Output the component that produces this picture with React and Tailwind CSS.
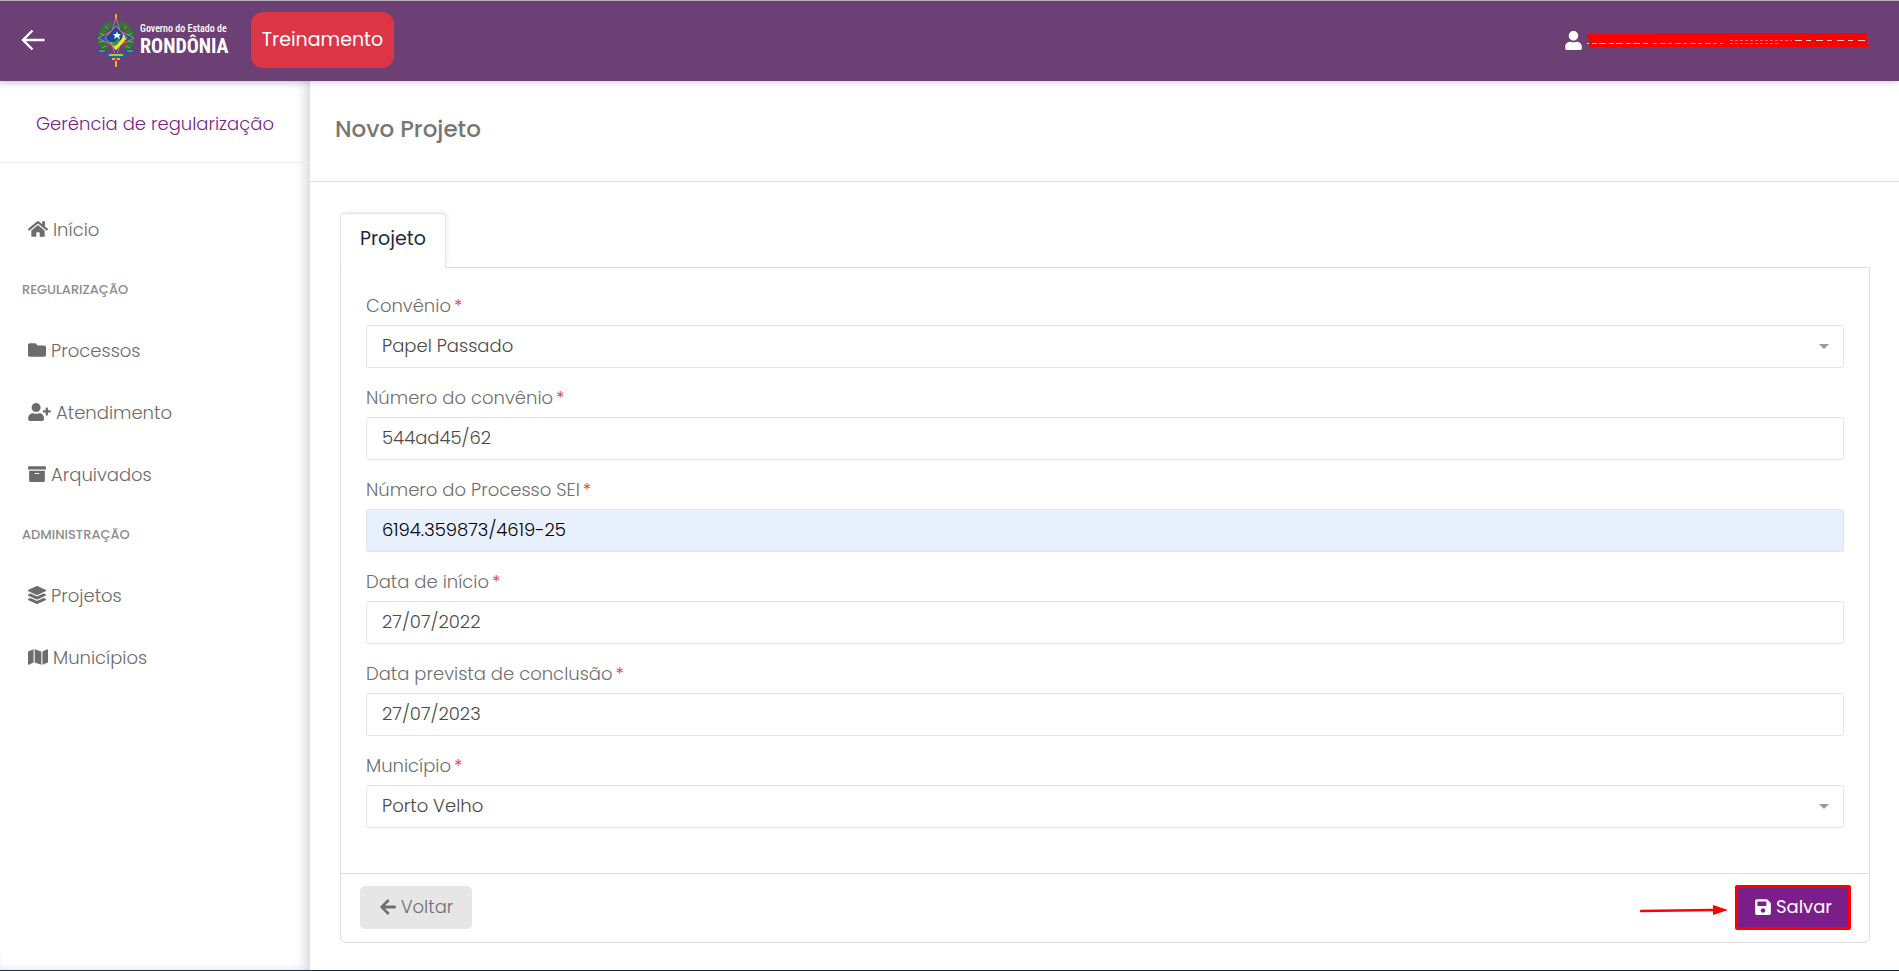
import { useState } from 'react';
import {
  FaArchive,
  FaArrowLeft,
  FaFolder,
  FaHome,
  FaLayerGroup,
  FaMap,
  FaSave,
  FaUser,
  FaUserPlus
} from 'react-icons/fa';

const menu = [
  { items: [{ label: 'Início', icon: FaHome, size: 'w-5' }] },
  {
    title: 'Regularização',
    items: [
      { label: 'Processos', icon: FaFolder, size: 'w-[18px]' },
      { label: 'Atendimento', icon: FaUserPlus, size: 'w-[23px]' },
      { label: 'Arquivados', icon: FaArchive, size: 'w-[18px]' }
    ]
  },
  {
    title: 'Administração',
    items: [
      { label: 'Projetos', icon: FaLayerGroup, size: 'w-[18px]' },
      { label: 'Municípios', icon: FaMap, size: 'w-5' }
    ]
  }
];

const fields = [
  { name: 'convenio', label: 'Convênio', options: ['Papel Passado'] },
  { name: 'numeroConvenio', label: 'Número do convênio' },
  { name: 'processoSei', label: 'Número do Processo SEI', autofilled: true },
  { name: 'dataInicio', label: 'Data de início' },
  { name: 'dataConclusao', label: 'Data prevista de conclusão' },
  { name: 'municipio', label: 'Município', options: ['Porto Velho'] }
];

function Emblem() {
  return (
    <svg viewBox="0 0 38 53" className="h-[53px] w-[38px]" aria-hidden="true">
      {/* wreath */}
      <path d="M15 9.500A15.500 15.500 0 0 0 10 36M23 9.500A15.500 15.500 0 0 1 28 36" fill="none" stroke="#1f7d3c" strokeWidth="7" />
      <path d="M8 12l3 3M3 19l4 2M2 28l5-1M5 34l4-2M30 12l-3 3M35 19l-4 2M36 28l-5-1M33 34l-4-2" stroke="#7fae3f" strokeWidth="1" />
      <path d="M6 15l2 3M10 11l2 1M8 30l3 2M32 15l-2 3M28 11l-2 1M30 30l-3 2" stroke="#c9303e" strokeWidth="2" />
      {/* sword */}
      <path d="M19 0v11M19 42v11" stroke="#e9b21e" strokeWidth="2" />
      <path d="M15 45h8" stroke="#e9b21e" strokeWidth="2" />
      <path d="M19 42v5" stroke="#d33a35" strokeWidth="2" />
      {/* star */}
      <path d="M19 4l4 13 14 7-14 7-4 12-4-12-14-7 14-7z" fill="#1c56a8" stroke="#e07068" strokeWidth="1" />
      <path d="M19 12l11 12-11 12L8 24z" fill="#1747a0" stroke="#d8868e" strokeWidth="1" />
      <path d="M26 19c0 8-5 11-13 9l6 8 10-11z" fill="#f2e534" />
      <path d="M21 23c-2 5-4 6-7 6l3 3c4-1 6-4 6-9z" fill="#2f9348" />
      <path d="M20 17l1 3h3l-2 2 1 3-3-2-3 2 1-3-2-2h3z" fill="#fff" />
      {/* ribbons */}
      <path d="M0 35h9v4H1zM29 35h9l-1 4h-8z" fill="#1d50b0" />
      <path d="M2 37h6M30 37h6" stroke="#c9b64a" strokeWidth="1" />
      <path d="M10 39h18v4H10z" fill="#1d62b4" />
      <path d="M12 41h14" stroke="#a8c93e" strokeWidth="2" />
    </svg>
  );
}

function Header() {
  return (
    <header className="relative z-10 flex h-[81px] shrink-0 items-center border-t border-[#b9b0bb] bg-[#6c3f75] pr-[30px] pb-[2px] pl-[21px] text-white shadow-md">
      <button type="button" aria-label="Recolher menu" className="mr-[52px]">
        <svg viewBox="0 0 24 22" className="h-[22px] w-6" fill="none" stroke="currentColor" strokeWidth="2.4">
          <path d="M11.500 1.500L2 11l9.500 9.500M2 11h21.500" />
        </svg>
      </button>
      <a href="#" className="flex items-center gap-[5px]">
        <Emblem />
        <span className="flex w-[86px] flex-col whitespace-nowrap font-['Roboto_Condensed','Barlow_Condensed',Roboto,sans-serif] font-bold">
          <span className="text-[10px] leading-[12px] font-medium">Governo do Estado de</span>
          <span className="text-[20px] leading-[23px]">RONDÔNIA</span>
        </span>
      </a>
      <button type="button" className="ml-[25px] h-14 w-[143px] rounded-xl bg-[#dc3545] text-[19px] font-normal">
        Treinamento
      </button>
      <a href="#" aria-label="Usuário" className="ml-auto flex items-center gap-[5px]">
        <FaUser className="h-[19px] w-[17px]" />
        <svg viewBox="0 0 282 14" className="h-[14px] w-[282px]" aria-hidden="true">
          <path d="M1 1h69V0h210v11l2 1v2H2V6L0 4z" fill="#ff0000" />
          <path d="M0 10.500h2M5 10.500h56" stroke="#e8c8d8" strokeWidth="1" strokeDasharray="5 2 7 3" />
          <path d="M66 10.500h70" stroke="#ff9090" strokeWidth="1" strokeDasharray="4 3 6 2" />
          <path d="M143 7.500h62M143 10.500h50" stroke="#ff7070" strokeWidth="1" strokeDasharray="3 2" />
          <path d="M208 7.500h72" stroke="#ffd8d8" strokeWidth="1" strokeDasharray="7 4 5 5" />
        </svg>
      </a>
    </header>
  );
}

function Sidebar() {
  return (
    <aside className="w-[310px] shrink-0 shadow-[inset_-6px_0_12px_-2px_#d3d6dc]">
      <h2 className="flex h-[82px] items-center justify-center border-b border-[#ececef] pt-1 text-[18px] text-[#7b1e8a]">
        Gerência de regularização
      </h2>
      <nav className="pt-[35px]">
        {menu.map((group, index) => (
          <div key={`group-${index}`}>
            {group.title && (
              <h3 className="flex h-[59px] items-center pl-[22px] text-[13px] font-medium text-[#8c8c8c] uppercase">
                {group.title}
              </h3>
            )}
            {group.items.map(({ label, icon: Icon, size }) => (
              <a
                key={label}
                href="#"
                className="flex h-[62px] items-center gap-[5px] pl-7 text-[18px] text-[#6c6c6c]"
              >
                <Icon className={`h-[18px] ${size}`} />
                {label}
              </a>
            ))}
          </div>
        ))}
      </nav>
    </aside>
  );
}

function Field({ field, value, onChange }) {
  const box = 'block h-[43px] w-full rounded-[3px] border border-[#e4e4e4] px-[15px] pb-[2px] text-[18px]';

  return (
    <div className="mb-[18px]">
      <label htmlFor={field.name} className="block h-[31px] text-[18px] leading-6 text-[#6f6f6f]">
        {field.label}
        <span className="ml-[3px] text-[#e8383d]">*</span>
      </label>
      {field.options ? (
        <div className="relative">
          <select
            id={field.name}
            value={value}
            onChange={onChange}
            className={`${box} appearance-none bg-white text-[#4a4a4a]`}
          >
            {field.options.map(option => (
              <option key={option}>{option}</option>
            ))}
          </select>
          <svg viewBox="0 0 10 5" className="pointer-events-none absolute top-[19px] right-[15px] h-[5px] w-[10px]">
            <path d="M0 0h10L5 5z" fill="#999" />
          </svg>
        </div>
      ) : (
        <input
          id={field.name}
          type="text"
          value={value}
          onChange={onChange}
          className={`${box} ${field.autofilled ? 'bg-[#e8f0fe] text-black' : 'bg-white text-[#4a4a4a]'}`}
        />
      )}
    </div>
  );
}

export default function App() {
  const [form, setForm] = useState({
    convenio: 'Papel Passado',
    numeroConvenio: '544ad45/62',
    processoSei: '6194.359873/4619-25',
    dataInicio: '27/07/2022',
    dataConclusao: '27/07/2023',
    municipio: 'Porto Velho'
  });

  return (
    <div className="flex min-h-screen flex-col border-b border-[#1c2a3f] bg-white font-[Poppins,Inter,sans-serif] font-light">
      <Header />
      <div className="flex flex-1">
        <Sidebar />
        <main className="min-w-0 flex-1">
          <div className="flex h-[101px] items-center border-b border-[#dedede] px-[25px] pb-1">
            <h1 className="text-[23px] font-medium text-[#777]">Novo Projeto</h1>
          </div>

          <div className="pt-[31px] pr-[29px] pb-[27px] pl-[30px]">
            <div role="tablist" className="flex">
              <button
                type="button"
                role="tab"
                aria-selected="true"
                className="relative z-10 -mb-px h-[55px] rounded-t-[3px] border border-b-0 border-[#e4e4e4] bg-white px-[19px] pb-1 text-[19px] font-normal text-[#1c2a45] shadow-[3px_-3px_4px_-2px_#ececec]"
              >
                Projeto
              </button>
            </div>

            <form className="rounded-b-md border border-[#dedede]" onSubmit={(e) => e.preventDefault()}>
              <div className="px-[25px] pt-[26px] pb-[27px]">
                {fields.map(field => (
                  <Field
                    key={field.name}
                    field={field}
                    value={form[field.name]}
                    onChange={(e) => setForm(prev => ({ ...prev, [field.name]: e.target.value }))}
                  />
                ))}
              </div>

              <div className="flex items-center justify-between border-t border-[#dedede] pt-[11px] pr-[18px] pb-3 pl-[19px]">
                <button
                  type="button"
                  className="flex h-[43px] w-[112px] items-center justify-center gap-1 rounded-[5px] bg-[#e6e6e6] pb-[2px] text-[18px] text-[#6f6f6f]"
                >
                  <FaArrowLeft className="size-[18px]" />
                  Voltar
                </button>
                <div className="flex items-center gap-[7px]">
                  <svg viewBox="0 0 88 10" className="mt-1 h-[10px] w-[88px]" aria-hidden="true">
                    <path d="M1 6l72-1" stroke="#ff0000" strokeWidth="2.500" strokeLinecap="round" />
                    <path d="M73 0l15 5-15 5z" fill="#ff0000" />
                  </svg>
                  <button
                    type="submit"
                    className="flex h-[45px] w-[116px] items-center justify-center gap-1 rounded-[2px] border-[3px] border-[#ff0000] bg-[#7b1e8a] pb-[2px] text-[18px] font-normal text-white"
                  >
                    <FaSave className="size-[18px]" />
                    Salvar
                  </button>
                </div>
              </div>
            </form>
          </div>
        </main>
      </div>
    </div>
  );
}
